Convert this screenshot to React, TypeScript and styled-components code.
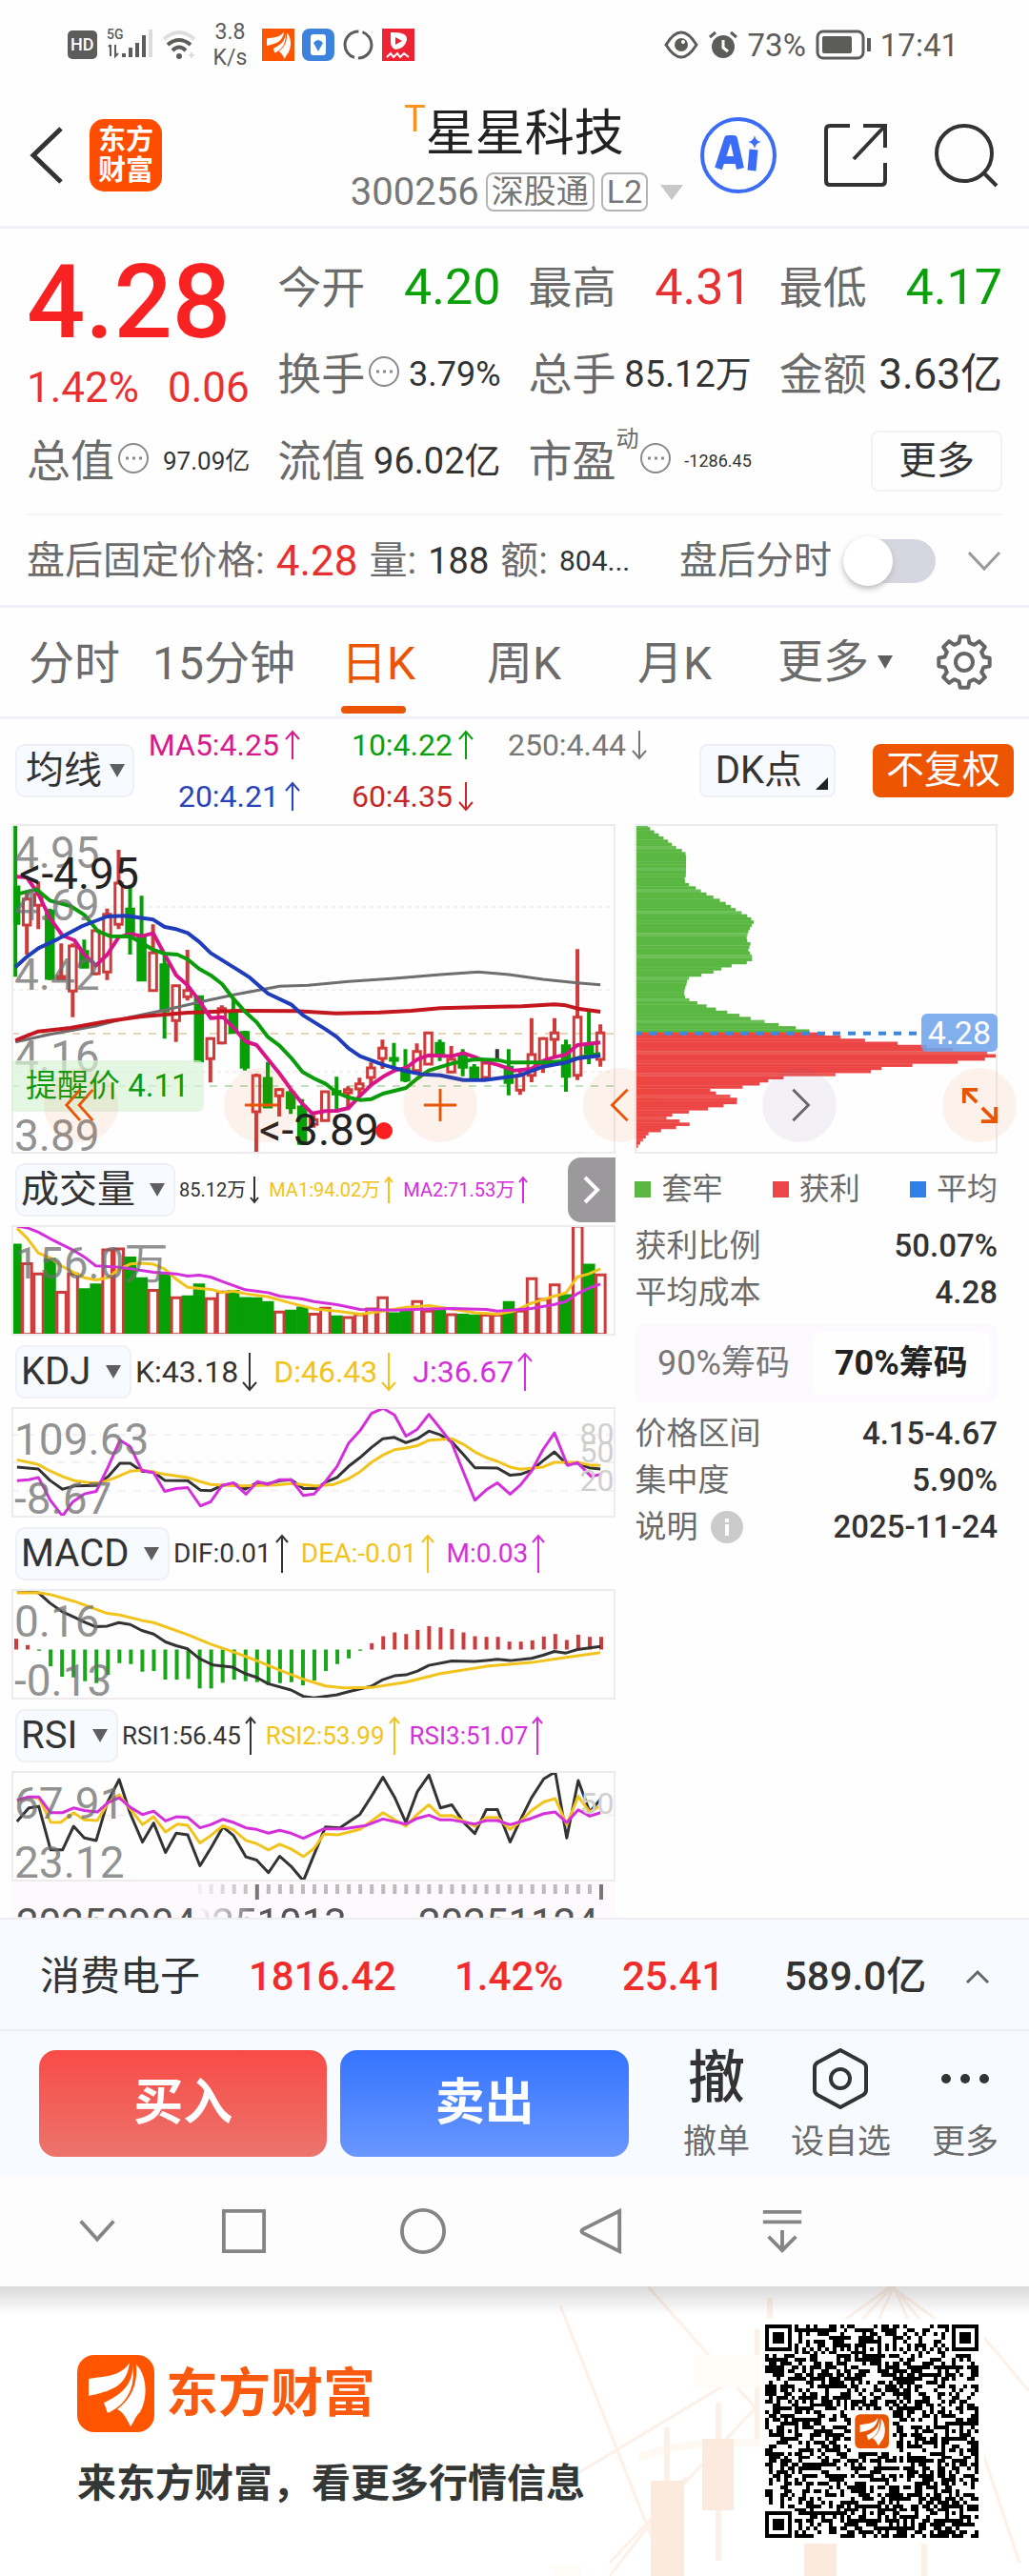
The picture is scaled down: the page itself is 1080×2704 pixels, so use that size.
import React from 'react';
import styled, { createGlobalStyle } from 'styled-components';

const RED = '#e93030';
const GREEN = '#09a009';
const CANDLE_RED = '#cf3a3a';
const CANDLE_GREEN = '#06a006';
const INK = '#333';
const GREY = '#6b6b6b';
const YELLOW = '#f2c31b';
const MAGENTA = '#d52fdc';
const ORANGE = '#ea5504';

const GlobalStyle = createGlobalStyle`
  * { box-sizing: border-box; }
  body {
    margin: 0;
    background: #fefefe;
    color: ${INK};
    font-family: Roboto, "Noto Sans CJK SC", sans-serif;
    line-height: 1;
  }
  button, select, input { font: inherit; color: inherit; margin: 0; }
  button { border: 0; background: none; padding: 0; cursor: pointer; }
`;

const Svg = styled.svg`
  display: block;
  flex: none;
  overflow: visible;
`;

type Pt = [number, number];

/* ---------- status bar ---------- */

const StatusBar = styled.div`
  display: flex;
  justify-content: space-between;
  align-items: center;
  height: 94px;
  padding: 0 74px 0 71px;
  color: #5c5c5a;
  font-size: 33px;
`;
const StatusGroup = styled.div<{ $gap: number }>`
  display: flex;
  align-items: center;
  gap: ${(p) => p.$gap}px;
`;
const HdBadge = styled.span`
  padding: 6px 3px;
  border-radius: 5px;
  background: #5c5c5a;
  color: #fff;
  font-size: 18px;
  font-weight: 500;
`;
const NetSpeed = styled.span`
  font-size: 23px;
  line-height: 27px;
  text-align: center;
  padding: 0 8px 0 10px;
`;

const FEATHERS =
  'M55 8C45 23 30 22 12 25L12 43C34 38 52 34 55 8ZM58 9C60 30 46 42 28 50L32 61C52 52 62 34 58 9ZM62 10C64 34 54 48 42 57C50 61 52 68 56 75C60 70 61 64 66 60C74 46 74 22 62 10Z';

const BrandMark = ({ size, radius = 18, color = '#ff5500' }: { size: number; radius?: number; color?: string }) => (
  <Svg width={size} height={size} viewBox="0 0 81 81" aria-hidden>
    <rect width="81" height="81" rx={radius} fill={color} />
    <path d={FEATHERS} fill="#fff" />
  </Svg>
);

const Status = () => (
  <StatusBar>
    <StatusGroup $gap={8}>
      <HdBadge>HD</HdBadge>
      <Svg width="52" height="36" viewBox="0 0 52 36">
        <text x="2" y="12" fontSize="14" fontWeight="500" fill="#5c5c5a">5G</text>
        <path d="M6 18v12M4 20l2-2M11 18v12l3-3" stroke="#5c5c5a" strokeWidth="2" fill="none" />
        <path d="M20 31v-4M27 31v-10M34 31v-15M41 31v-23" stroke="#5c5c5a" strokeWidth="4" />
        <path d="M48 31v-29" stroke="#ddd" strokeWidth="4" />
      </Svg>
      <Svg width="36" height="32" viewBox="0 0 36 32">
        <path d="M2 10Q18 -4 34 10" stroke="#ddd" strokeWidth="4" fill="none" />
        <path d="M6 16Q18 6 30 16M11 22Q18 15 25 22" stroke="#5c5c5a" strokeWidth="4" fill="none" />
        <circle cx="18" cy="28" r="3" fill="#5c5c5a" />
        <path d="M28 27h6M31 24v6" stroke="#ddd" strokeWidth="2" />
      </Svg>
      <NetSpeed>3.8<br />K/s</NetSpeed>
      <BrandMark size={34} radius={0} />
      <Svg width="34" height="34" viewBox="0 0 34 34">
        <rect width="34" height="34" rx="8" fill="#3d82dc" />
        <rect x="9" y="6" width="16" height="22" rx="3" fill="#fff" />
        <path d="M12 15q5-6 10 0l-5 9z" fill="#3d82dc" />
      </Svg>
      <Svg width="34" height="34" viewBox="0 0 34 34">
        <circle cx="17" cy="17" r="14" fill="none" stroke="#5c5c5a" strokeWidth="3" strokeDasharray="40 4" strokeDashoffset="18" />
      </Svg>
      <Svg width="34" height="34" viewBox="0 0 34 34">
        <rect width="34" height="34" fill="#ee2434" />
        <path d="M9 4q18-1 17 8q-2 9-12 10q-5-2-5-8z" fill="#fff" />
        <path d="M14 9l7 4-7 4z" fill="#ee2434" />
        <path d="M5 30l4-4 3 4 4-4 3 4 4-4 5 4" stroke="#fff" strokeWidth="2" fill="none" />
      </Svg>
    </StatusGroup>
    <StatusGroup $gap={10}>
      <Svg width="36" height="30" viewBox="0 0 36 30">
        <path d="M2 15Q18 -11 34 15Q18 41 2 15Z" fill="none" stroke="#5c5c5a" strokeWidth="3" />
        <circle cx="18" cy="15" r="7" fill="#5c5c5a" />
        <circle cx="20" cy="12" r="2" fill="#fff" />
      </Svg>
      <Svg width="32" height="30" viewBox="0 0 32 30">
        <circle cx="16" cy="17" r="12" fill="#5c5c5a" />
        <path d="M2 7l6-5M24 2l6 5" stroke="#5c5c5a" strokeWidth="3" />
        <path d="M16 10v8l5 4" stroke="#fff" strokeWidth="3" fill="none" />
      </Svg>
      <span>73%</span>
      <Svg width="58" height="32" viewBox="0 0 58 32">
        <rect x="2" y="2" width="48" height="28" rx="6" fill="none" stroke="#5c5c5a" strokeWidth="3" />
        <rect x="7" y="7" width="31" height="18" rx="2" fill="#5c5c5a" />
        <path d="M56 9v14" stroke="#5c5c5a" strokeWidth="4" />
      </Svg>
      <span>17:41</span>
    </StatusGroup>
  </StatusBar>
);

/* ---------- header ---------- */

const HeaderBar = styled.header`
  display: grid;
  grid-template-columns: 1fr auto 1fr;
  align-items: center;
  height: 146px;
  padding: 0 32px 6px 31px;
  border-bottom: 3px solid #f0f1f6;
`;
const HeaderSide = styled.div<{ $gap: number; $end?: boolean }>`
  display: flex;
  align-items: center;
  gap: ${(p) => p.$gap}px;
  justify-content: ${(p) => (p.$end ? 'flex-end' : 'flex-start')};
`;
const BrandTile = styled.div`
  width: 76px;
  height: 76px;
  padding: 6px 9px;
  border-radius: 15px;
  background: #ff4d00;
  color: #fff;
  font-size: 29px;
  font-weight: 700;
  line-height: 32px;
`;
const TitleBlock = styled.div`
  display: flex;
  flex-direction: column;
  align-items: center;
  gap: 12px;
  padding: 10px 0 0 12px;
`;
const StockName = styled.h1`
  display: flex;
  margin: 0 0 0 -12px;
  font-size: 52px;
  line-height: 56px;
  font-weight: 400;
  color: #222;
`;
const TMark = styled.sup`
  font-size: 38px;
  line-height: 24px;
  color: #f8941d;
`;
const CodeLine = styled.div`
  display: flex;
  align-items: center;
  gap: 7px;
  font-size: 40px;
  color: #777;
`;
const Tag = styled.span`
  padding: 1px 4px;
  border: 2px solid #b5b5b5;
  border-radius: 8px;
  font-size: 34px;
  line-height: 35px;
`;

const Header = () => (
  <HeaderBar>
    <HeaderSide $gap={28}>
      <button aria-label="返回">
        <Svg width="35" height="60" viewBox="0 0 35 60">
          <path d="M33 2L4 30L33 58" fill="none" stroke="#333" strokeWidth="5" />
        </Svg>
      </button>
      <BrandTile>东方<br />财富</BrandTile>
    </HeaderSide>
    <TitleBlock>
      <StockName><TMark>T</TMark>星星科技</StockName>
      <CodeLine>
        300256 <Tag>深股通</Tag><Tag>L2</Tag>
        <Svg width="36" height="18" viewBox="0 0 36 18"><path d="M6 1h24L18 17z" fill="#c8c8c8" /></Svg>
      </CodeLine>
    </TitleBlock>
    <HeaderSide $gap={48} $end>
      <button aria-label="Ai">
        <Svg width="82" height="82" viewBox="0 0 82 82">
          <circle cx="41" cy="41" r="38" fill="none" stroke="#3a6cf6" strokeWidth="4" />
          <path d="M20 55L30 24H36L43 55M24 46H39" fill="none" stroke="#3a6cf6" strokeWidth="8" strokeLinejoin="round" />
          <path d="M57 35L55 57" stroke="#3a6cf6" strokeWidth="9" />
          <path d="M58 20q1 6 7 7q-6 1-7 7q-1-6-7-7q6-1 7-7z" fill="#3a6cf6" />
        </Svg>
      </button>
      <button aria-label="分享">
        <Svg width="68" height="68" viewBox="0 0 68 68">
          <path d="M28 3H7Q3 3 3 7V61Q3 65 7 65H61Q65 65 65 61V42M42 3H65V26M65 3L32 38" fill="none" stroke="#333" strokeWidth="4" />
        </Svg>
      </button>
      <button aria-label="搜索">
        <Svg width="68" height="68" viewBox="0 0 68 68">
          <circle cx="32" cy="32" r="29" fill="none" stroke="#333" strokeWidth="4" />
          <path d="M53 53L66 66" stroke="#333" strokeWidth="4" />
        </Svg>
      </button>
    </HeaderSide>
  </HeaderBar>
);

/* ---------- quote ---------- */

const QuoteGrid = styled.section`
  display: grid;
  grid-template-columns: repeat(4, minmax(0, 1fr));
  grid-auto-rows: 91px;
  column-gap: 29px;
  margin: 0 28px;
  padding: 16px 0 10px;
  border-bottom: 2px solid #f7f4f6;
`;
const PriceCell = styled.div`
  grid-row: span 2;
  display: flex;
  flex-direction: column;
  justify-content: space-between;
  padding: 13px 0 8px;
  color: ${RED};
`;
const BigPrice = styled.strong`
  font-size: 108px;
  font-weight: 500;
  line-height: 96px;
  color: #f82222;
`;
const Change = styled.div`
  display: flex;
  gap: 30px;
  font-size: 44px;
  line-height: 46px;
  white-space: nowrap;
`;
const Cell = styled.div`
  display: flex;
  align-items: center;
  justify-content: space-between;
  white-space: nowrap;
`;
const CellLabel = styled.span`
  display: flex;
  align-items: center;
  gap: 3px;
  font-size: 46px;
  color: ${GREY};
  > svg { margin-bottom: 6px; }
`;
const CellValue = styled.span<{ $size: number; $color?: string }>`
  font-size: ${(p) => p.$size}px;
  color: ${(p) => p.$color || INK};
`;
const Dyn = styled.sup`
  align-self: flex-start;
  margin: -12px -3px 0 -3px;
  font-size: 24px;
  line-height: 24px;
`;
const MoreButton = styled.button`
  justify-self: end;
  align-self: center;
  width: 138px;
  height: 64px;
  border: 2px solid #f1f1f4;
  border-radius: 8px;
  font-size: 40px;
`;

const Dots = () => (
  <Svg width="34" height="34" viewBox="0 0 34 34">
    <circle cx="17" cy="17" r="15" fill="none" stroke="#8a8a8a" strokeWidth="2" />
    <path d="M9 17h3M16 17h3M23 17h3" stroke="#8a8a8a" strokeWidth="3" />
  </Svg>
);

interface StatProps { label: string; value: string; size: number; color?: string; dots?: boolean; sup?: string }
const Stat = ({ label, value, size, color, dots, sup }: StatProps) => (
  <Cell>
    <CellLabel>{label}{sup && <Dyn>{sup}</Dyn>}{dots && <Dots />}</CellLabel>
    <CellValue $size={size} $color={color}>{value}</CellValue>
  </Cell>
);

const Quote = () => (
  <QuoteGrid>
    <PriceCell>
      <BigPrice>4.28</BigPrice>
      <Change><span>1.42%</span><span>0.06</span></Change>
    </PriceCell>
    <Stat label="今开" value="4.20" size={52} color={GREEN} />
    <Stat label="最高" value="4.31" size={52} color={RED} />
    <Stat label="最低" value="4.17" size={52} color={GREEN} />
    <Stat label="换手" value="3.79%" size={36} dots />
    <Stat label="总手" value="85.12万" size={38} />
    <Stat label="金额" value="3.63亿" size={44} />
    <Stat label="总值" value="97.09亿" size={26} dots />
    <Stat label="流值" value="96.02亿" size={38} />
    <Stat label="市盈" value="-1286.45" size={18} sup="动" dots />
    <MoreButton>更多</MoreButton>
  </QuoteGrid>
);

/* ---------- after-hours ---------- */

const AfterRow = styled.section`
  display: flex;
  align-items: center;
  justify-content: space-between;
  height: 97px;
  padding: 2px 30px 0 28px;
  border-bottom: 3px solid #f0f1f6;
  font-size: 40px;
  color: ${GREY};
  white-space: nowrap;
`;
const AfterPart = styled.div`
  display: flex;
  align-items: center;
  gap: 12px;
`;
const ToggleLabel = styled.label`
  display: flex;
  align-items: center;
  gap: 12px;
  margin-right: 22px;
`;
const Toggle = styled.input`
  appearance: none;
  display: flex;
  align-items: center;
  width: 97px;
  height: 46px;
  border-radius: 23px;
  background: #d5d6df;
  &::before {
    content: '';
    width: 52px;
    height: 52px;
    border-radius: 50%;
    background: #fff;
    box-shadow: 0 3px 6px #bbb;
  }
  &:checked { justify-content: flex-end; background: ${ORANGE}; }
`;

const AfterHours = () => (
  <AfterRow>
    <AfterPart>
      <span>盘后固定价格:</span>
      <CellValue $size={44} $color={RED}>4.28</CellValue>
      <span>量:</span>
      <CellValue $size={38}>188</CellValue>
      <span>额:</span>
      <CellValue $size={30}>804...</CellValue>
    </AfterPart>
    <AfterPart>
      <ToggleLabel>盘后分时<Toggle type="checkbox" /></ToggleLabel>
      <Svg width="34" height="20" viewBox="0 0 34 20">
        <path d="M1 1L17 18L33 1" fill="none" stroke="#999" strokeWidth="3" />
      </Svg>
    </AfterPart>
  </AfterRow>
);

/* ---------- drop-downs ---------- */

const DropBox = styled.div<{ $plain?: boolean }>`
  display: grid;
  align-items: center;
  justify-self: start;
  flex: none;
  height: 56px;
  border: ${(p) => (p.$plain ? '0' : '2px solid #eff0f6')};
  border-radius: 10px;
  background: ${(p) => (p.$plain ? 'none' : '#f7faff')};
`;
const DropSelect = styled.select<{ $size: number; $room: number; $pad: number }>`
  grid-area: 1 / 1;
  appearance: none;
  border: 0;
  background: none;
  height: 52px;
  padding: 0 ${(p) => p.$room}px 0 ${(p) => p.$pad}px;
  font-size: ${(p) => p.$size}px;
`;
const DropMark = styled(Svg)<{ $right: number }>`
  grid-area: 1 / 1;
  justify-self: end;
  margin-right: ${(p) => p.$right}px;
  pointer-events: none;
`;
interface DropProps { label: string; size?: number; plain?: boolean; tight?: boolean }
const Drop = ({ label, size = 40, plain, tight }: DropProps) => (
  <DropBox $plain={plain}>
    <DropSelect aria-label={label} $size={size} $pad={plain ? 0 : tight ? 9 : 4} $room={plain ? 24 : tight ? 32 : 40}>
      <option>{label}</option>
    </DropSelect>
    <DropMark $right={plain ? 0 : tight ? 8 : 9} width="16" height="14" viewBox="0 0 16 14">
      <path d="M0 0h16L8 14z" fill="#5f5f5f" />
    </DropMark>
  </DropBox>
);

/* ---------- period tabs ---------- */

const TabBar = styled.nav`
  display: grid;
  grid-template-columns: 130fr 198fr 153fr 158fr 147fr 166fr 60fr;
  align-items: center;
  justify-items: start;
  height: 117px;
  padding: 0 38px 0 30px;
  border-bottom: 3px solid #f0f1f6;
  color: ${GREY};
  font-size: 48px;
  white-space: nowrap;
`;
const Tab = styled.button<{ $active?: boolean }>`
  display: flex;
  flex-direction: column;
  justify-content: center;
  height: 114px;
  padding-top: 4px;
  color: ${(p) => (p.$active ? ORANGE : 'inherit')};
  &::after {
    content: '';
    width: 68px;
    height: 8px;
    margin: 20px 0 -28px;
    border-radius: 4px;
    background: ${(p) => (p.$active ? ORANGE : 'transparent')};
  }
`;
const GEAR = Array.from({ length: 8 }, (_, i) => {
  const at = (r: number, d: number) => {
    const a = ((i * 45 + d) * Math.PI) / 180;
    return `${30 + r * Math.sin(a)},${30 - r * Math.cos(a)}`;
  };
  return [at(27, -9), at(27, 9), at(21, 15), at(21, 30)].join(' ');
}).join(' ');

const Tabs = () => (
  <TabBar>
    <Tab>分时</Tab>
    <Tab>15分钟</Tab>
    <Tab $active>日K</Tab>
    <Tab>周K</Tab>
    <Tab>月K</Tab>
    <Drop label="更多" size={48} plain />
    <button aria-label="设置">
      <Svg width="60" height="60" viewBox="0 0 60 60">
        <polygon points={GEAR} fill="none" stroke="#666" strokeWidth="4" strokeLinejoin="round" />
        <circle cx="30" cy="30" r="9" fill="none" stroke="#666" strokeWidth="4" />
      </Svg>
    </button>
  </TabBar>
);

/* ---------- moving averages ---------- */

const MaRow = styled.section`
  display: flex;
  align-items: center;
  height: 110px;
  padding: 0 16px 2px;
`;
const MaGrid = styled.div`
  display: grid;
  grid-template-columns: 174px 182px 182px;
  row-gap: 22px;
  margin-right: auto;
  font-size: 32px;
`;
const Reading = styled.span<{ $color: string; $gap?: number }>`
  display: flex;
  align-items: center;
  justify-content: flex-end;
  gap: ${(p) => p.$gap || 6}px;
  color: ${(p) => p.$color};
  white-space: nowrap;
`;
const PillButton = styled.button<{ $solid?: boolean }>`
  display: flex;
  align-items: center;
  height: 56px;
  padding: 0 ${(p) => (p.$solid ? 14 : 6)}px 0 ${(p) => (p.$solid ? 14 : 15)}px;
  margin-left: ${(p) => (p.$solid ? 39 : 0)}px;
  border: ${(p) => (p.$solid ? '0' : '2px solid #eff0f6')};
  border-radius: 8px;
  background: ${(p) => (p.$solid ? '#ed5500' : '#f7faff')};
  color: ${(p) => (p.$solid ? '#fff' : INK)};
  font-size: 40px;
  svg { align-self: flex-end; margin: 0 0 6px 14px; }
`;

const Arrow = ({ up, h = 32, w = 16 }: { up?: boolean; h?: number; w?: number }) => {
  const mid = w / 2;
  const head = w / 2;
  return (
    <Svg width={w} height={h} viewBox={`0 0 ${w} ${h}`}>
      <path
        d={
          up
            ? `M${mid} ${h - 1}V2M1 ${head + 2}L${mid} 2L${w - 1} ${head + 2}`
            : `M${mid} 1V${h - 2}M1 ${h - head - 2}L${mid} ${h - 2}L${w - 1} ${h - head - 2}`
        }
        fill="none"
        stroke="currentColor"
        strokeWidth="2"
      />
    </Svg>
  );
};

const MovingAverages = () => (
  <MaRow>
    <Drop label="均线" tight />
    <MaGrid>
      <Reading $color="#d81b8c">MA5:4.25<Arrow up /></Reading>
      <Reading $color="#0ba00b">10:4.22<Arrow up /></Reading>
      <Reading $color="#777">250:4.44<Arrow /></Reading>
      <Reading $color="#2a44bb">20:4.21<Arrow up /></Reading>
      <Reading $color="#c62828">60:4.35<Arrow /></Reading>
    </MaGrid>
    <PillButton>
      DK点
      <Svg width="13" height="13" viewBox="0 0 13 13"><path d="M13 0V13H0z" fill="#222" /></Svg>
    </PillButton>
    <PillButton $solid>不复权</PillButton>
  </MaRow>
);

/* ---------- chart primitives ---------- */

const Pane = styled.div<{ $h: number }>`
  position: relative;
  height: ${(p) => p.$h}px;
  outline: 2px solid #eeeaee;
  outline-offset: -2px;
`;
const Plot = styled.svg`
  display: block;
  width: 100%;
  height: 100%;
  overflow: hidden;
  * { vector-effect: non-scaling-stroke; }
`;
const PaneText = styled.span<{ $y: number; $x?: number; $dark?: boolean }>`
  position: absolute;
  left: ${(p) => p.$x ?? 3}px;
  top: ${(p) => p.$y - 23}px;
  font-size: 46px;
  white-space: nowrap;
  color: ${(p) => (p.$dark ? '#222' : 'rgba(110,110,110,0.75)')};
`;
const ScaleText = styled.span<{ $y: number }>`
  position: absolute;
  right: 2px;
  top: ${(p) => p.$y - 16}px;
  font-size: 32px;
  color: #cfcfcf;
`;

const STEP = 28.96;
const slot = (i: number) => 41 + i * STEP;

const Line = ({ pts, color, w = 4 }: { pts: Pt[]; color: string; w?: number }) => (
  <polyline points={pts.map((p) => p.join(',')).join(' ')} fill="none" stroke={color} strokeWidth={w} strokeLinejoin="round" />
);
const Guide = ({ y, color, dash = '8 8' }: { y: number; color: string; dash?: string }) => (
  <path d={`M31 ${y}H1557`} stroke={color} strokeWidth="2" strokeDasharray={dash} />
);

/* ---------- candles ---------- */

// kind (1 up, 0 down, 2 flat), high, body top, body bottom, low
const CANDLES: [number, number, number, number, number][] = [
  [0, 44, 242, 357, 525], [1, 260, 280, 362, 455], [1, 225, 265, 300, 375], [0, 310, 318, 530, 535],
  [1, 420, 524, 531, 535], [1, 420, 428, 570, 652], [0, 408, 445, 495, 497], [1, 375, 380, 515, 520],
  [1, 310, 328, 510, 535], [1, 125, 230, 360, 375], [0, 235, 312, 385, 455], [0, 270, 400, 535, 537],
  [1, 360, 450, 568, 570], [0, 450, 487, 632, 720], [1, 550, 553, 663, 730], [1, 440, 568, 588, 600],
  [0, 585, 588, 790, 790], [1, 715, 720, 783, 858], [1, 615, 625, 733, 738], [0, 590, 635, 700, 700],
  [0, 695, 700, 810, 820], [1, 830, 836, 950, 1084], [0, 793, 845, 935, 938], [1, 875, 880, 900, 965],
  [0, 880, 890, 937, 957], [0, 910, 935, 1050, 1055], [1, 960, 975, 990, 1000], [1, 885, 887, 978, 980],
  [0, 840, 886, 894, 945], [1, 870, 880, 890, 945], [1, 843, 862, 878, 900], [1, 795, 812, 842, 865],
  [1, 723, 750, 782, 815], [0, 733, 782, 788, 825], [0, 753, 815, 850, 857], [1, 735, 760, 820, 822],
  [1, 698, 702, 800, 802], [0, 723, 735, 770, 790], [1, 743, 785, 825, 828], [0, 753, 770, 810, 838],
  [0, 800, 812, 842, 845], [1, 793, 797, 842, 845], [2, 753, 786, 788, 790], [0, 753, 810, 858, 898],
  [1, 820, 835, 882, 897], [1, 655, 770, 835, 857], [1, 715, 720, 800, 828], [1, 655, 702, 722, 780],
  [0, 723, 742, 838, 887], [1, 438, 652, 835, 850], [0, 635, 740, 765, 800], [1, 675, 702, 785, 808],
];

const MA5: Pt[] = [[45, 210], [70, 212], [99, 265], [128, 340], [160, 395], [190, 410], [215, 455], [244, 490], [273, 455], [302, 400], [331, 390], [360, 397], [389, 388], [418, 455], [447, 520], [476, 552], [505, 600], [534, 655], [565, 652], [592, 685], [621, 728], [650, 740], [679, 785], [708, 830], [737, 880], [766, 925], [790, 955], [824, 948], [853, 947], [882, 938], [911, 900], [940, 865], [969, 840], [998, 820], [1027, 812], [1056, 785], [1085, 772], [1143, 775], [1172, 765], [1201, 778], [1230, 793], [1258, 802], [1300, 820], [1344, 815], [1373, 790], [1402, 778], [1431, 770], [1460, 740], [1518, 732]];
const MA10: Pt[] = [[45, 265], [95, 250], [128, 285], [180, 302], [215, 330], [250, 382], [280, 397], [331, 398], [360, 418], [389, 440], [418, 452], [450, 455], [476, 470], [505, 500], [534, 520], [563, 548], [592, 595], [621, 635], [650, 668], [679, 715], [708, 742], [737, 780], [766, 825], [795, 845], [824, 862], [853, 890], [882, 905], [911, 913], [940, 910], [969, 893], [1027, 875], [1056, 845], [1085, 820], [1143, 798], [1200, 785], [1258, 787], [1287, 795], [1380, 795], [1431, 790], [1480, 775], [1518, 768]];
const MA20: Pt[] = [[41, 495], [70, 462], [99, 435], [150, 405], [210, 365], [273, 335], [320, 333], [389, 345], [418, 368], [447, 375], [476, 387], [505, 415], [534, 450], [592, 495], [630, 525], [679, 578], [737, 612], [766, 645], [824, 690], [853, 715], [882, 750], [911, 775], [969, 802], [1027, 822], [1070, 832], [1114, 835], [1172, 850], [1225, 850], [1316, 835], [1373, 808], [1431, 795], [1460, 782], [1518, 773]];
const MA60: Pt[] = [[41, 725], [99, 697], [180, 686], [273, 665], [360, 650], [476, 638], [600, 632], [750, 633], [850, 640], [960, 637], [1040, 632], [1114, 624], [1230, 620], [1320, 618], [1402, 612], [1431, 615], [1460, 625], [1518, 635]];
const MA250: Pt[] = [[41, 730], [128, 706], [244, 680], [331, 652], [418, 630], [505, 605], [592, 582], [650, 568], [708, 555], [780, 552], [882, 540], [998, 530], [1114, 518], [1210, 510], [1287, 518], [1373, 533], [1460, 544], [1518, 550]];

const AlertTag = styled.span`
  position: absolute;
  left: 0;
  top: 248px;
  padding: 0 15px;
  border-radius: 0 6px 6px 0;
  background: rgba(215, 243, 215, 0.7);
  color: #109a10;
  font-size: 33px;
  line-height: 54px;
`;
const RedDot = styled.i`
  position: absolute;
  left: 382px;
  top: 313px;
  width: 18px;
  height: 18px;
  border-radius: 50%;
  background: #fb1f1f;
`;

const CandlePane = () => (
  <Pane $h={346}>
    <Plot viewBox="31 44 1526 1038" preserveAspectRatio="none">
      <Guide y={304} color="#f0eef0" dash="4 4" />
      <Guide y={567} color="#f0eef0" dash="4 4" />
      <Guide y={825} color="#f0eef0" dash="4 4" />
      <Guide y={704} color="#e6d4b4" />
      <Guide y={869} color="#bfe0bf" />
      {CANDLES.map(([kind, high, top, bottom, low], i) => {
        const c = kind === 1 ? CANDLE_RED : kind === 0 ? CANDLE_GREEN : '#333';
        return (
          <g key={i} stroke={c} strokeWidth="3">
            <path d={`M${slot(i)} ${high}V${top}M${slot(i)} ${bottom}V${low}`} strokeWidth="4" />
            {kind !== 2 && <rect x={slot(i) - 9} y={top} width={18} height={bottom - top} fill={kind === 0 ? c : 'none'} />}
          </g>
        );
      })}
      <Line pts={MA250} color="#6e6e6e" w={3} />
      <Line pts={MA60} color="#c4161f" />
      <Line pts={MA5} color="#d8148a" />
      <Line pts={MA10} color="#0a9c0a" />
      <Line pts={MA20} color="#1f3cba" />
    </Plot>
    <PaneText $y={30}>4.95</PaneText>
    <PaneText $y={85}>4.69</PaneText>
    <PaneText $y={158}>4.42</PaneText>
    <PaneText $y={244}>4.16</PaneText>
    <PaneText $y={327}>3.89</PaneText>
    <AlertTag>提醒价 4.11</AlertTag>
    <PaneText $y={52} $x={8} $dark>&lt;-4.95</PaneText>
    <PaneText $y={321} $x={260} $dark>&lt;-3.89</PaneText>
    <RedDot />
  </Pane>
);

/* ---------- floating chart tools ---------- */

const ToolRow = styled.div`
  position: absolute;
  left: 46px;
  right: 13px;
  top: 256px;
  display: flex;
  justify-content: space-between;
`;
const RoundTool = styled.button<{ $muted?: boolean }>`
  display: grid;
  place-items: center;
  width: 78px;
  height: 78px;
  border-radius: 50%;
  background: ${(p) => (p.$muted ? 'rgba(110,80,150,0.08)' : 'rgba(240,90,30,0.08)')};
  color: ${(p) => (p.$muted ? '#666' : ORANGE)};
`;
const TOOLS: { name: string; d: string; muted?: boolean }[] = [
  { name: '更早', d: 'M19 3L4 20L19 37M33 3L18 20L33 37' },
  { name: '缩小', d: 'M2 20H38' },
  { name: '放大', d: 'M2 20H38M20 2V38' },
  { name: '向左', d: 'M28 3L11 20L28 37' },
  { name: '向右', d: 'M13 3L30 20L13 37', muted: true },
  { name: '全屏', d: 'M18 3H3V18M3 3L17 17M22 38H38V22M38 38L23 23' },
];
const Tools = () => (
  <ToolRow>
    {TOOLS.map((t) => (
      <RoundTool key={t.name} aria-label={t.name} $muted={t.muted}>
        <Svg width="38" height="38" viewBox="0 0 40 40">
          <path d={t.d} fill="none" stroke="currentColor" strokeWidth={t.name === '全屏' ? 4 : 3} />
        </Svg>
      </RoundTool>
    ))}
  </ToolRow>
);

/* ---------- indicator panes ---------- */

const VOLUME: [number, number][] = [
  [0, 290], [1, 348], [1, 380], [0, 335], [1, 438], [1, 380], [0, 430], [0, 415], [1, 305], [1, 302], [0, 330], [0, 395], [1, 432],
  [0, 385], [1, 455], [0, 452], [0, 415], [1, 458], [1, 437], [0, 435], [0, 457], [0, 458], [0, 470], [1, 500], [0, 497], [0, 487],
  [1, 507], [1, 488], [0, 515], [1, 517], [1, 508], [1, 490], [1, 455], [0, 505], [0, 497], [1, 467], [1, 497], [0, 495], [1, 508],
  [0, 510], [0, 512], [1, 510], [1, 510], [0, 470], [1, 497], [1, 395], [1, 460], [1, 415], [0, 448], [1, 230], [0, 353], [1, 383],
];
const VMA1: Pt[] = [[45, 240], [70, 270], [99, 318], [128, 332], [160, 360], [190, 380], [215, 395], [245, 402], [275, 395], [300, 370], [331, 352], [360, 350], [390, 353], [418, 368], [447, 400], [476, 425], [540, 433], [563, 442], [592, 437], [621, 445], [679, 455], [737, 475], [795, 493], [853, 500], [911, 510], [969, 500], [1027, 488], [1085, 483], [1143, 493], [1201, 505], [1258, 510], [1300, 500], [1344, 475], [1402, 453], [1431, 443], [1460, 393], [1489, 383], [1518, 367]];
const VMA2: Pt[] = [[45, 233], [70, 238], [99, 252], [128, 272], [186, 308], [215, 330], [244, 358], [302, 362], [331, 367], [390, 378], [447, 383], [476, 390], [505, 387], [534, 393], [563, 407], [621, 433], [679, 442], [708, 453], [766, 462], [795, 470], [853, 480], [911, 495], [998, 497], [1085, 493], [1143, 492], [1230, 495], [1258, 500], [1316, 495], [1344, 492], [1400, 480], [1431, 470], [1460, 445], [1489, 428], [1518, 415]];

const KLINE: Pt[] = [[45, 990], [99, 996], [128, 1032], [160, 1060], [190, 1050], [245, 1048], [275, 1020], [305, 978], [331, 978], [360, 1003], [390, 1006], [418, 1032], [476, 1033], [508, 1063], [534, 1065], [563, 1048], [592, 1042], [621, 1060], [650, 1040], [679, 1043], [708, 1033], [737, 1030], [768, 1058], [800, 1058], [824, 1038], [853, 1023], [882, 988], [911, 960], [940, 928], [969, 900], [998, 896], [1027, 913], [1056, 900], [1085, 876], [1114, 888], [1143, 910], [1172, 950], [1201, 992], [1258, 993], [1290, 1016], [1316, 1013], [1344, 1000], [1373, 970], [1402, 942], [1431, 978], [1460, 978], [1489, 992], [1518, 996]];
const DLINE: Pt[] = [[45, 967], [75, 975], [99, 982], [128, 1002], [160, 1020], [190, 1033], [230, 1040], [260, 1038], [290, 1025], [331, 1003], [360, 1000], [390, 1005], [418, 1013], [476, 1023], [508, 1036], [534, 1045], [600, 1050], [700, 1047], [737, 1042], [800, 1050], [845, 1045], [882, 1027], [911, 1005], [940, 975], [969, 952], [998, 935], [1027, 930], [1056, 922], [1085, 905], [1143, 900], [1172, 918], [1201, 942], [1230, 960], [1258, 972], [1290, 990], [1316, 997], [1373, 990], [1402, 975], [1460, 975], [1489, 983], [1518, 985]];
const JLINE: Pt[] = [[45, 1033], [75, 1030], [99, 1023], [115, 1060], [128, 1093], [160, 1145], [186, 1100], [215, 1075], [245, 1067], [275, 990], [305, 905], [331, 925], [360, 1000], [390, 1008], [418, 1067], [447, 1058], [476, 1055], [508, 1113], [534, 1100], [563, 1048], [592, 1040], [623, 1076], [652, 1036], [679, 1045], [708, 1030], [737, 1030], [768, 1080], [795, 1075], [824, 1035], [853, 988], [882, 915], [911, 875], [940, 820], [969, 804], [998, 825], [1027, 892], [1056, 870], [1085, 823], [1114, 868], [1143, 915], [1172, 1005], [1201, 1095], [1230, 1062], [1258, 1040], [1290, 1076], [1316, 1047], [1344, 1003], [1373, 935], [1402, 882], [1435, 985], [1460, 976], [1495, 1020], [1518, 1013]];

const DIF: Pt[] = [[45, 239], [70, 240], [99, 248], [128, 280], [160, 308], [190, 325], [215, 340], [244, 355], [273, 353], [302, 342], [331, 348], [360, 367], [390, 378], [420, 403], [447, 415], [476, 425], [505, 455], [540, 476], [590, 483], [621, 503], [650, 515], [679, 535], [737, 555], [768, 575], [795, 580], [853, 570], [882, 560], [940, 543], [969, 522], [998, 510], [1027, 507], [1056, 495], [1085, 477], [1143, 463], [1201, 465], [1258, 458], [1290, 462], [1344, 455], [1373, 445], [1402, 433], [1431, 438], [1460, 427], [1518, 417]];
const DEA: Pt[] = [[45, 248], [99, 247], [128, 253], [190, 275], [273, 313], [302, 317], [360, 335], [390, 342], [476, 380], [534, 410], [592, 435], [650, 462], [708, 492], [766, 520], [824, 542], [870, 548], [940, 547], [1027, 530], [1114, 503], [1230, 480], [1344, 468], [1431, 452], [1518, 437]];
const HIST = [393, 413, 431, 480, 513, 515, 527, 533, 507, 470, 473, 497, 495, 522, 522, 520, 550, 550, 532, 522, 527, 530, 540, 533, 530, 540, 525, 495, 473, 455, 431, 407, 385, 373, 378, 365, 353, 357, 362, 373, 385, 387, 387, 402, 402, 398, 386, 378, 397, 380, 387, 387];

const RSI1: Pt[] = [[45, 965], [75, 922], [100, 917], [130, 1055], [160, 1055], [188, 980], [215, 1017], [245, 1025], [273, 905], [303, 832], [331, 940], [362, 1030], [390, 970], [420, 1063], [447, 1002], [476, 1007], [507, 1105], [534, 1050], [565, 982], [592, 1010], [623, 1077], [650, 1087], [680, 1127], [708, 1075], [737, 1107], [768, 1153], [795, 1070], [824, 982], [860, 985], [911, 942], [940, 885], [969, 825], [998, 887], [1027, 968], [1056, 870], [1085, 818], [1114, 922], [1143, 912], [1172, 967], [1201, 1003], [1230, 927], [1258, 927], [1290, 1030], [1316, 960], [1344, 890], [1375, 830], [1404, 808], [1433, 1017], [1462, 835], [1491, 935], [1518, 895]];
const RSI2: Pt[] = [[45, 900], [75, 888], [100, 890], [130, 967], [155, 968], [188, 937], [215, 960], [248, 962], [275, 905], [303, 880], [331, 925], [362, 975], [390, 950], [420, 998], [450, 973], [476, 977], [507, 1033], [534, 1010], [565, 978], [592, 992], [623, 1025], [650, 1035], [680, 1055], [708, 1037], [737, 1052], [768, 1076], [795, 1050], [820, 1005], [855, 1007], [911, 990], [969, 937], [1027, 980], [1056, 942], [1085, 912], [1114, 947], [1143, 946], [1201, 980], [1230, 952], [1258, 952], [1290, 990], [1316, 965], [1344, 930], [1375, 903], [1404, 892], [1433, 975], [1462, 885], [1491, 935], [1518, 915]];
const RSI3: Pt[] = [[45, 897], [75, 887], [100, 887], [130, 937], [160, 937], [188, 922], [215, 930], [248, 935], [275, 905], [303, 890], [331, 920], [362, 943], [390, 932], [420, 963], [447, 950], [476, 952], [507, 985], [534, 975], [565, 958], [592, 968], [623, 985], [650, 990], [680, 1002], [708, 993], [737, 1002], [768, 1018], [820, 988], [870, 988], [925, 978], [969, 957], [1027, 973], [1056, 955], [1085, 945], [1114, 960], [1143, 960], [1201, 973], [1230, 962], [1258, 962], [1290, 975], [1344, 955], [1375, 940], [1404, 935], [1433, 968], [1462, 928], [1491, 948], [1518, 937]];

const IndicatorHead = styled.div<{ $size: number }>`
  display: flex;
  align-items: center;
  height: 75px;
  padding-left: 4px;
  font-size: ${(p) => p.$size}px;
`;
const Readings = styled.div<{ $gap: number }>`
  display: flex;
  gap: ${(p) => p.$gap}px;
  margin: 0 auto 0 4px;
`;
const NextButton = styled.button`
  display: grid;
  place-items: center;
  width: 50px;
  height: 68px;
  border-radius: 14px 0 0 14px;
  background: #9b999b;
`;

interface HeadProps { name: string; size: number; gap: number; items: [string, boolean, string][]; arrow: [number, number]; next?: boolean }
const Head = ({ name, size, gap, items, arrow, next }: HeadProps) => (
  <IndicatorHead $size={size}>
    <Drop label={name} />
    <Readings $gap={gap}>
      {items.map(([text, up, color]) => (
        <Reading key={text} $color={color} $gap={4}>{text}<Arrow up={up} w={arrow[0]} h={arrow[1]} /></Reading>
      ))}
    </Readings>
    {next && (
      <NextButton aria-label="下一页">
        <Svg width="18" height="30" viewBox="0 0 18 30">
          <path d="M2 2L15 15L2 28" fill="none" stroke="#fff" strokeWidth="4" />
        </Svg>
      </NextButton>
    )}
  </IndicatorHead>
);

const Axis = styled.div`
  position: relative;
  height: 38px;
  overflow: hidden;
  background: #fdf9fd;
  font-size: 42px;
  color: #555;
`;
const AxisDate = styled.span<{ $x: number; $fade?: boolean }>`
  position: absolute;
  left: ${(p) => p.$x}px;
  top: 23px;
  mask-image: ${(p) => (p.$fade ? 'linear-gradient(90deg, transparent 18%, #000 55%)' : 'none')};
`;

const Indicators = () => (
  <>
    <Head name="成交量" size={20} gap={10} arrow={[10, 30]} next items={[['85.12万', false, INK], ['MA1:94.02万', true, YELLOW], ['MA2:71.53万', true, MAGENTA]]} />
    <Pane $h={116}>
      <Plot viewBox="31 230 1526 347" preserveAspectRatio="none">
        {VOLUME.map(([up, top], i) => (
          <rect
            key={i}
            x={slot(i) - 11}
            y={top + 3}
            width={23}
            height={570 - top}
            fill={up ? '#fff' : CANDLE_GREEN}
            stroke={up ? CANDLE_RED : CANDLE_GREEN}
            strokeWidth="3"
          />
        ))}
        <Line pts={VMA1} color={YELLOW} w={3} />
        <Line pts={VMA2} color={MAGENTA} w={3} />
      </Plot>
      <PaneText $y={40}>156.0万</PaneText>
    </Pane>

    <Head name="KDJ" size={32} gap={17} arrow={[16, 42]} items={[['K:43.18', false, INK], ['D:46.43', false, YELLOW], ['J:36.67', true, MAGENTA]]} />
    <Pane $h={116}>
      <ScaleText $y={28}>80</ScaleText>
      <ScaleText $y={47}>50</ScaleText>
      <ScaleText $y={77}>20</ScaleText>
      <Plot viewBox="31 800 1526 350" preserveAspectRatio="none">
        <Guide y={888} color="#f3eef3" />
        <Guide y={975} color="#f3eef3" />
        <Guide y={1065} color="#f3eef3" />
        <Line pts={KLINE} color={INK} w={3} />
        <Line pts={DLINE} color={YELLOW} w={3} />
        <Line pts={JLINE} color={MAGENTA} w={3} />
      </Plot>
      <PaneText $y={34}>109.63</PaneText>
      <PaneText $y={96}>-8.67</PaneText>
    </Pane>

    <Head name="MACD" size={28} gap={13} arrow={[14, 42]} items={[['DIF:0.01', true, INK], ['DEA:-0.01', true, YELLOW], ['M:0.03', true, MAGENTA]]} />
    <Pane $h={116}>
      <Plot viewBox="31 236 1526 349" preserveAspectRatio="none">
        {HIST.map((y, i) => (
          <path key={i} d={`M${slot(i) + 2} 427V${y}`} stroke={y > 427 ? '#1aa51a' : CANDLE_RED} strokeWidth="4" />
        ))}
        <Line pts={DIF} color={INK} w={3} />
        <Line pts={DEA} color={YELLOW} w={3} />
      </Plot>
      <PaneText $y={34}>0.16</PaneText>
      <PaneText $y={96}>-0.13</PaneText>
    </Pane>

    <Head name="RSI" size={26} gap={10} arrow={[12, 42]} items={[['RSI1:56.45', true, INK], ['RSI2:53.99', true, YELLOW], ['RSI3:51.07', true, MAGENTA]]} />
    <Pane $h={116}>
      <ScaleText $y={34}>50</ScaleText>
      <Plot viewBox="31 805 1526 350" preserveAspectRatio="none">
        <Guide y={945} color="#f3eef3" />
        <Line pts={RSI1} color={INK} w={3} />
        <Line pts={RSI2} color={YELLOW} w={3} />
        <Line pts={RSI3} color={MAGENTA} w={3} />
      </Plot>
      <PaneText $y={34}>67.91</PaneText>
      <PaneText $y={96}>23.12</PaneText>
    </Pane>
    <Axis>
      <Plot viewBox="31 0 1526 38" preserveAspectRatio="none">
        {Array.from({ length: 36 }, (_, k) => k + 16).map((i) => {
          const major = i === 21 || i === 51;
          return (
            <path
              key={i}
              d={`M${slot(i) + 2} 3V${major ? 19 : 13}`}
              stroke={major ? '#777' : '#bbb'}
              strokeWidth="4"
              opacity={i < 21 ? (i - 15) / 6 : 1}
            />
          );
        })}
      </Plot>
      <AxisDate $x={5}>20250904</AxisDate>
      <AxisDate $x={163} $fade>20251013</AxisDate>
      <AxisDate $x={427}>20251124</AxisDate>
    </Axis>
  </>
);

/* ---------- chip distribution ---------- */

const PROFILE: Pt[] = [[44, 118], [60, 128], [75, 150], [95, 180], [115, 205], [133, 238], [145, 241], [205, 240], [222, 234], [235, 250], [245, 272], [262, 300], [280, 340], [297, 372], [315, 400], [330, 430], [350, 456], [362, 448], [380, 438], [400, 432], [410, 432], [418, 445], [430, 441], [445, 436], [455, 449], [470, 449], [480, 432], [487, 393], [500, 350], [510, 325], [520, 285], [530, 245], [545, 243], [565, 236], [585, 234], [600, 255], [615, 300], [630, 345], [645, 405], [655, 440], [665, 485], [675, 530], [690, 612], [698, 640], [712, 710], [722, 778], [732, 885], [742, 985], [752, 1060], [762, 1185], [772, 1223], [782, 1195], [792, 1115], [802, 965], [812, 860], [822, 830], [832, 718], [840, 560], [850, 505], [860, 480], [870, 437], [880, 315], [890, 330], [900, 378], [912, 405], [922, 400], [930, 360], [940, 310], [950, 248], [960, 195], [968, 173], [978, 215], [988, 256], [998, 213], [1008, 165], [1015, 125], [1030, 112], [1045, 98], [1055, 90], [1070, 83], [1082, 78]];
const reach = (y: number) => {
  const k = Math.max(1, PROFILE.findIndex((p) => p[0] >= y));
  const [a, b] = [PROFILE[k - 1], PROFILE[k]];
  return a[1] + ((b[1] - a[1]) * (y - a[0])) / (b[0] - a[0]);
};
const BAR = 1038 / 106;

const PriceBadge = styled.span`
  position: absolute;
  right: 0;
  top: 199px;
  padding: 0 7px;
  border-radius: 6px;
  background: rgba(112, 164, 236, 0.88);
  color: #fff;
  font-size: 34px;
  line-height: 40px;
`;

const ChipPane = () => (
  <Pane $h={346}>
    <Plot viewBox="78 44 1145 1038" preserveAspectRatio="none">
      {Array.from({ length: 106 }, (_, i) => {
        const y = 44 + i * BAR;
        const red = y > 694;
        return (
          <rect
            key={i}
            x="78"
            y={y}
            width={reach(y + BAR / 2) - 78}
            height={BAR + 1}
            fill={red ? (i % 7 === 3 ? '#ee5655' : '#ed4646') : i % 7 === 0 ? '#6bc057' : '#5ab742'}
          />
        );
      })}
      <path d="M78 703H975" stroke="#3c86dc" strokeWidth="4" strokeDasharray="8 8" />
    </Plot>
    <PriceBadge>4.28</PriceBadge>
  </Pane>
);

const Legend = styled.div`
  display: flex;
  justify-content: space-between;
  align-items: center;
  height: 72px;
  padding-top: 2px;
  font-size: 32px;
  color: ${GREY};
`;
const LegendItem = styled.span<{ $color: string }>`
  display: flex;
  align-items: center;
  gap: 11px;
  &::before {
    content: '';
    width: 17px;
    height: 17px;
    background: ${(p) => p.$color};
  }
`;
const Facts = styled.dl`
  display: grid;
  grid-template-columns: auto auto;
  justify-content: space-between;
  margin: 0;
  font-size: 33px;
  line-height: 49px;
  dt { display: flex; align-items: center; gap: 14px; color: ${GREY}; }
  dd { margin: 0; font-weight: 500; text-align: right; }
`;
const Segmented = styled.div`
  display: grid;
  grid-template-columns: 1fr 1fr;
  height: 82px;
  margin: 9px 0 8px;
  padding: 8px 8px 8px 0;
  border-radius: 8px;
  background: #fdfaff;
`;
const Segment = styled.button<{ $active?: boolean }>`
  border-radius: 8px;
  font-size: 36px;
  font-weight: ${(p) => (p.$active ? 700 : 400)};
  color: ${(p) => (p.$active ? '#222' : '#777')};
  background: ${(p) => (p.$active ? '#fefefe' : 'none')};
`;

const ChipPanel = () => (
  <div>
    <ChipPane />
    <Legend>
      <LegendItem $color="#5ab742">套牢</LegendItem>
      <LegendItem $color="#ed4646">获利</LegendItem>
      <LegendItem $color="#2f80e8">平均</LegendItem>
    </Legend>
    <Facts>
      <dt>获利比例</dt><dd>50.07%</dd>
      <dt>平均成本</dt><dd>4.28</dd>
    </Facts>
    <Segmented>
      <Segment>90%筹码</Segment>
      <Segment $active>70%筹码</Segment>
    </Segmented>
    <Facts>
      <dt>价格区间</dt><dd>4.15-4.67</dd>
      <dt>集中度</dt><dd>5.90%</dd>
      <dt>
        说明
        <Svg width="34" height="34" viewBox="0 0 34 34">
          <circle cx="17" cy="17" r="17" fill="#cbcbcb" />
          <path d="M17 8v4M17 14v12" stroke="#fff" strokeWidth="4" />
        </Svg>
      </dt>
      <dd>2025-11-24</dd>
    </Facts>
  </div>
);

const ChartArea = styled.main`
  position: relative;
  display: grid;
  grid-template-columns: minmax(0, 5fr) minmax(0, 3fr);
  column-gap: 20px;
  padding: 0 33px 0 12px;
`;

/* ---------- sector strip and actions ---------- */

const SectorRow = styled.section`
  display: grid;
  grid-template-columns: 219fr 216fr 176fr 170fr 191fr 24fr;
  align-items: center;
  height: 119px;
  padding: 4px 42px 0;
  border-top: 2px solid #eeeef2;
  border-bottom: 2px solid #eeeff3;
  background: #f7faff;
  font-size: 42px;
  white-space: nowrap;
`;
const Figure = styled.b<{ $red?: boolean }>`
  font-weight: 500;
  color: ${(p) => (p.$red ? '#f22b2b' : INK)};
`;
const ActionRow = styled.section`
  display: flex;
  align-items: center;
  height: 151px;
  padding: 0 32px 0 41px;
  background: #f7faff;
`;
const TradeButton = styled.button<{ $from: string; $to: string }>`
  flex: 1;
  height: 112px;
  margin-right: 14px;
  border-radius: 18px;
  background: linear-gradient(${(p) => p.$from}, ${(p) => p.$to});
  color: #fff;
  font-size: 52px;
  font-weight: 700;
`;
const IconAction = styled.button`
  display: flex;
  flex-direction: column;
  align-items: center;
  gap: 16px;
  margin-left: 43px;
  font-size: 35px;
  color: ${GREY};
`;
const IconSlot = styled.span`
  display: grid;
  place-items: center;
  height: 66px;
  font-size: 60px;
  font-weight: 500;
  color: ${INK};
`;

const Bottom = () => (
  <>
    <SectorRow>
      <span>消费电子</span>
      <Figure $red>1816.42</Figure>
      <Figure $red>1.42%</Figure>
      <Figure $red>25.41</Figure>
      <Figure>589.0亿</Figure>
      <Svg width="24" height="14" viewBox="0 0 24 14"><path d="M1 13L12 2L23 13" fill="none" stroke="#666" strokeWidth="3" /></Svg>
    </SectorRow>
    <ActionRow>
      <TradeButton $from="#f84b46" $to="#ec746c">买入</TradeButton>
      <TradeButton $from="#3474ff" $to="#6a97ff">卖出</TradeButton>
      <IconAction><IconSlot>撤</IconSlot>撤单</IconAction>
      <IconAction>
        <IconSlot>
          <Svg width="60" height="66" viewBox="0 0 60 66">
            <path d="M30 3L54 16Q57 18 57 21V45Q57 48 54 50L30 63L6 50Q3 48 3 45V21Q3 18 6 16Z" fill="none" stroke="#333" strokeWidth="4" strokeLinejoin="round" />
            <circle cx="30" cy="33" r="10" fill="none" stroke="#333" strokeWidth="4" />
          </Svg>
        </IconSlot>
        设自选
      </IconAction>
      <IconAction>
        <IconSlot>
          <Svg width="54" height="12" viewBox="0 0 54 12">
            <circle cx="7" cy="6" r="5" fill="#333" /><circle cx="27" cy="6" r="5" fill="#333" /><circle cx="47" cy="6" r="5" fill="#333" />
          </Svg>
        </IconSlot>
        更多
      </IconAction>
    </ActionRow>
  </>
);

/* ---------- system navigation ---------- */

const NavBar = styled.nav`
  display: grid;
  grid-template-columns: 154fr 188fr 187fr 190fr 205fr;
  align-items: center;
  justify-items: start;
  height: 117px;
  padding: 0 78px;
  background: #fdfdfd;
`;
const NAV: [string, string][] = [
  ['收起', 'M7 14L25 34L43 14'],
  ['最近任务', 'M3 3H47V47H3Z'],
  ['主页', 'M25 2A23 23 0 1 0 25 48A23 23 0 1 0 25 2Z'],
  ['后退', 'M45 3V47L5 27Q2 25 5 23Z'],
  ['通知', 'M4 4H46M4 15H46M25 24V46M10 31L25 46L40 31'],
];

const SystemNav = () => (
  <NavBar>
    {NAV.map(([name, d]) => (
      <button key={name} aria-label={name}>
        <Svg width="48" height="48" viewBox="0 0 50 50">
          <path d={d} fill="none" stroke="#858585" strokeWidth="4" />
        </Svg>
      </button>
    ))}
  </NavBar>
);

/* ---------- promo footer ---------- */

const Promo = styled.footer`
  position: relative;
  display: flex;
  align-items: center;
  justify-content: space-between;
  height: 304px;
  padding: 0 53px 0 81px;
  background: #fff;
  overflow: hidden;
`;
const PromoArt = styled.svg`
  position: absolute;
  right: 0;
  top: 0;
  width: 500px;
  height: 304px;
`;
const Shade = styled.div`
  position: absolute;
  left: 0;
  right: 0;
  top: 0;
  height: 30px;
  background: linear-gradient(rgba(0, 0, 0, 0.15), rgba(0, 0, 0, 0));
`;
const PromoText = styled.div`
  position: relative;
  display: flex;
  flex-direction: column;
  gap: 31px;
  padding-bottom: 2px;
`;
const PromoBrand = styled.div`
  display: flex;
  align-items: center;
  gap: 12px;
  font-size: 55px;
  font-weight: 700;
  color: #fa5a10;
`;
const Slogan = styled.p`
  margin: 0;
  font-size: 41px;
  font-weight: 700;
  line-height: 46px;
  color: #333836;
`;
const QrCard = styled.div`
  position: relative;
  padding: 6px;
  margin-right: -6px;
  background: #fff;
`;

const QR_SIZE = 57;
const qrPath = (() => {
  let seed = 20251124;
  const rand = () => {
    seed = (seed * 1103515245 + 12345) % 2147483648;
    return seed / 2147483648;
  };
  const last = QR_SIZE - 7;
  const ring = (r: number, c: number, or: number, oc: number, half: number) => {
    const k = Math.max(Math.abs(r - or), Math.abs(c - oc));
    return k <= half ? k : -1;
  };
  let d = '';
  for (let r = 0; r < QR_SIZE; r += 1) {
    for (let c = 0; c < QR_SIZE; c += 1) {
      let on = rand() > 0.5;
      if (r === 6 || c === 6) on = (r + c) % 2 === 0;
      for (const [a, b] of [[28, 6], [6, 28], [28, 50], [50, 28], [50, 50]]) {
        const k = ring(r, c, a, b, 2);
        if (k >= 0) on = k !== 1;
      }
      for (const [a, b] of [[3, 3], [3, last + 3], [last + 3, 3]]) {
        const k = ring(r, c, a, b, 4);
        if (k >= 0) on = k !== 2 && k !== 4;
      }
      if (Math.abs(r - 28) < 6 && Math.abs(c - 28) < 6) on = false;
      if (on) d += `M${c} ${r}h1v1h-1z`;
    }
  }
  return d;
})();

const PromoFooter = () => (
  <Promo>
    <PromoArt viewBox="580 0 500 304" aria-hidden>
      <g fill="none" stroke="#fdf0e7" strokeWidth="3">
        <path d="M588 20L700 304M680 0L795 130M600 200L800 80M640 290L800 120M640 304L720 200M880 40L935 0L990 40M900 40L937 0L970 40M920 40L938 0L955 40M1030 50L1080 110M1030 170L1070 290" />
        <path d="M670 180Q720 160 800 165" strokeWidth="8" stroke="#fef9f3" />
        <path d="M795 45V160M808 12V45M700 148V210M754 122V288M970 270V304" strokeWidth="6" />
      </g>
      <path d="M683 204h35v100h-35zM737 160h33v75h-33zM844 270h34v34h-34z" fill="#fdeadf" />
      <path d="M580 293h30v11h-30zM728 72h70v34h-70z" fill="#fffcf8" />
    </PromoArt>
    <Shade />
    <PromoText>
      <PromoBrand><BrandMark size={81} />东方财富</PromoBrand>
      <Slogan>来东方财富，看更多行情信息</Slogan>
    </PromoText>
    <QrCard>
      <Svg width="224" height="224" viewBox="0 0 57 57" role="img" aria-label="二维码">
        <path d={qrPath} fill="#000" shapeRendering="crispEdges" />
        <g transform="translate(24 24) scale(0.112)">
          <rect width="81" height="81" rx="12" fill="#ea5504" />
          <path d={FEATHERS} fill="#fff" />
        </g>
      </Svg>
    </QrCard>
  </Promo>
);

export default function App() {
  return (
    <>
      <GlobalStyle />
      <Status />
      <Header />
      <Quote />
      <AfterHours />
      <Tabs />
      <MovingAverages />
      <ChartArea>
        <div>
          <CandlePane />
          <Indicators />
        </div>
        <ChipPanel />
        <Tools />
      </ChartArea>
      <Bottom />
      <SystemNav />
      <PromoFooter />
    </>
  );
}
